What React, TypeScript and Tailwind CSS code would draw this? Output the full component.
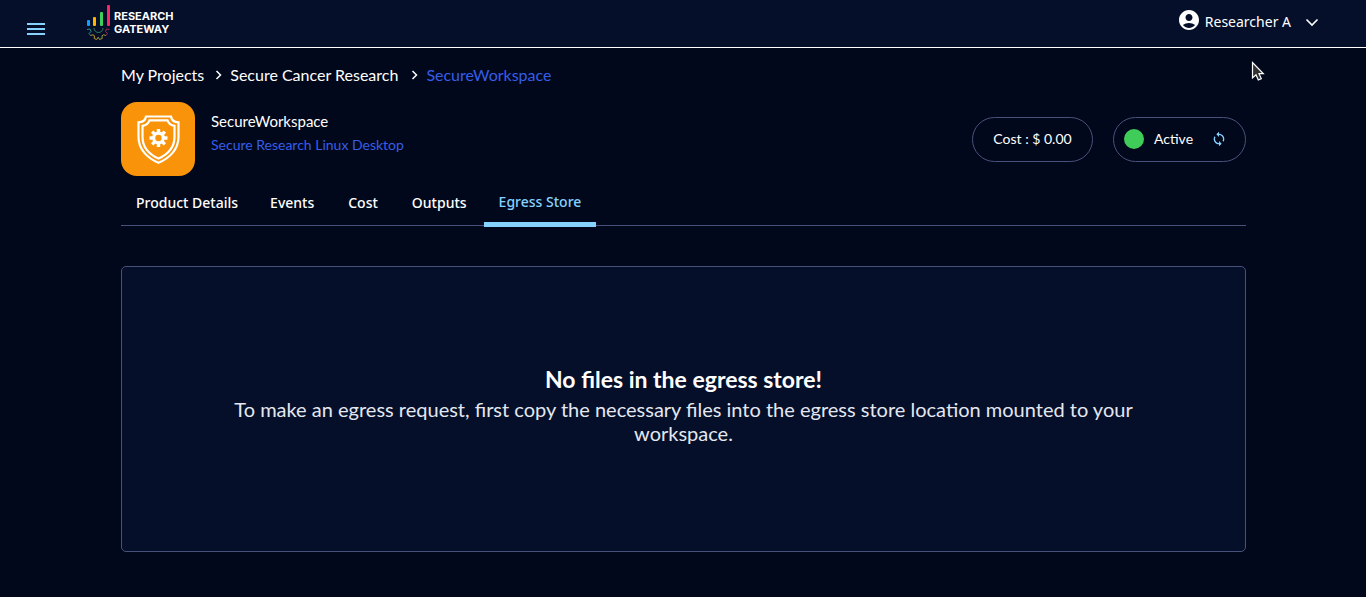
import React from "react";
import { MdAccountCircle, MdSync } from "react-icons/md";

const body = "font-['Lato','Noto_Sans',sans-serif]";

function MenuIcon() {
  return (
    <svg width="20" height="12" viewBox="0 0 20 12" fill="#86d2ff" aria-hidden="true">
      <rect x="1" width="18" height="2" />
      <rect x="1" y="5" width="18" height="2" />
      <rect x="1" y="10" width="18" height="2" />
    </svg>
  );
}

function LogoMark() {
  return (
    <svg width="26" height="36" viewBox="0 0 26 36" fill="none" aria-hidden="true">
      <rect x="1" y="15" width="3" height="6" rx="1" fill="#0da2ff" />
      <rect x="7" y="12" width="3" height="9" rx="1" fill="#ffb400" />
      <rect x="14" y="7" width="3" height="14" rx="1" fill="#3fcf5c" />
      <rect x="21" y="0" width="3" height="21" rx="1" fill="#fb2663" />
      <path d="M1 24.500 l3 -.5 l1 2.500 l-2 2 l1.500 2" stroke="#2f8f8a" />
      <path d="M4.500 30.500 l2.500 -.7 l1.500 1 l-.3 2.700 l2.500 1 l1.500 -2.300" stroke="#b9982c" />
      <path d="M12.200 32.200 l1.300 2.300 l2.700 -1 l-.2 -2.700 l1.500 -1 l2.500 .7" stroke="#9c9a36" />
      <path d="M20 30.500 l1.500 -2 l-2 -2 l1 -2.500 l3 .5" stroke="#a32a55" />
      <path d="M8 23 a4.500 4.500 0 0 0 9 0" stroke="#347f55" />
    </svg>
  );
}

function ShieldIcon() {
  const teeth = [0, 45, 90, 135, 180, 225, 270, 315];
  return (
    <svg width="74" height="74" viewBox="0 0 74 74" fill="none" stroke="#fff" aria-hidden="true">
      <path
        strokeWidth="2.200"
        d="M25 14.500H50C50.500 18 53 20 57.500 20.300V35C57.500 47 49 56 37.500 60.700C26 56 17.500 47 17.500 35V20.300C22 20 24.500 18 25 14.500Z"
      />
      <path
        strokeWidth="2.200"
        d="M28.500 18.300H46.500C47.500 21 50 23.200 53.500 23.800V35C53.500 45 46.500 52.500 37.500 56.600C28.500 52.500 21.500 45 21.500 35V23.800C25 23.200 27.500 21 28.500 18.300Z"
      />
      <circle cx="37.500" cy="36" r="4.800" strokeWidth="3.200" />
      {teeth.map((a) => (
        <path key={a} d="M37.500 27V31" strokeWidth="3.400" transform={`rotate(${a} 37.500 36)`} />
      ))}
    </svg>
  );
}

function Chevron({ className }: { className: string }) {
  return (
    <svg className={className} viewBox="0 0 12 12" fill="none" stroke="#fff" strokeWidth="1.500" aria-hidden="true">
      <path d="M4.500 2L8.500 6L4.500 10" />
    </svg>
  );
}

function Pointer() {
  return (
    <svg className="pointer-events-none absolute top-[61px] right-[100px]" width="16" height="21" viewBox="0 0 16 21" aria-hidden="true">
      <path
        d="M2.500 1.500V17L6 13.800L8.300 19L11.300 17.600L9 12.700H13.300Z"
        fill="#333"
        stroke="#fff"
        strokeWidth="1.200"
      />
    </svg>
  );
}

const tabs = ["Product Details", "Events", "Cost", "Outputs"];

export default function App() {
  return (
    <div className={`relative min-h-screen bg-[#02081b] text-white ${body}`}>
      <header className="flex h-12 items-center border-b border-white bg-[#050f2a] pr-[47px] pb-[2px] pl-[26px]">
        <button type="button" aria-label="Open menu" className="mt-3">
          <MenuIcon />
        </button>
        <a href="#home" className="ml-10 flex items-center gap-[2px]">
          <LogoMark />
          <span className="font-['Inter',sans-serif] text-[11px] leading-[13px] font-bold">
            RESEARCH
            <br />
            GATEWAY
          </span>
        </a>
        <button type="button" className="mb-[2px] ml-auto flex items-center font-['Noto_Sans',sans-serif] text-sm">
          <MdAccountCircle size={24} className="mr-1 mb-1" />
          Researcher A
          <svg className="ml-[14px]" width="14" height="14" viewBox="0 0 14 14" fill="none" stroke="#fff" strokeWidth="1.600" aria-hidden="true">
            <path d="M1.500 4.500L7 10L12.500 4.500" />
          </svg>
        </button>
      </header>
      <Pointer />

      <main className="pt-4 pr-[120px] pb-11 pl-[121px]">
        <nav aria-label="Breadcrumb" className="flex items-center text-base leading-[22px]">
          <a href="#projects">My Projects</a>
          <Chevron className="mr-[6px] ml-2 size-3" />
          <a href="#cancer">Secure Cancer Research</a>
          <Chevron className="mr-[6px] ml-[10px] size-3" />
          <span className="text-[#355dea]" aria-current="page">SecureWorkspace</span>
        </nav>

        <section className="mt-4 flex items-center">
          <div className="rounded-2xl bg-[#f8930a]">
            <ShieldIcon />
          </div>
          <div className="mb-3 ml-4">
            <h1 className="text-[15px] leading-6">SecureWorkspace</h1>
            <a href="#product" className="block text-sm leading-6 text-[#355dea]">
              Secure Research Linux Desktop
            </a>
          </div>
          <div className="ml-auto flex gap-5 text-sm">
            <div className="flex h-[45px] w-[121px] items-center justify-center rounded-full border border-[#46527a]">
              Cost : $ 0.00
            </div>
            <div className="flex h-[45px] w-[133px] items-center rounded-full border border-[#46527a] px-[10px]">
              <span className="mr-[10px] size-5 rounded-full bg-[#40cc58]" />
              Active
              <button type="button" aria-label="Refresh status" className="mr-2 ml-auto text-[#86d2ff]">
                <MdSync size={16} />
              </button>
            </div>
          </div>
        </section>

        <div role="tablist" className="mt-2 flex h-[42px] border-b border-[#46527a] font-['Noto_Sans',sans-serif] text-sm font-medium">
          {tabs.map((tab) => (
            <button key={tab} type="button" role="tab" aria-selected="false" className="px-[17px] pb-1 first:px-[15px]">
              {tab}
            </button>
          ))}
          <button
            type="button"
            role="tab"
            aria-selected="true"
            className="-mb-[2px] h-[43px] border-b-[5px] border-[#86d2ff] px-[15px] pb-[2px] text-[#86d2ff]"
          >
            Egress Store
          </button>
        </div>

        <section className="mt-10 flex h-[286px] flex-col items-center justify-center rounded-[5px] border border-[#46527a] bg-[#050f2a] px-[100px] pb-3 text-center">
          <h2 className="text-[23px] leading-9 font-bold">No files in the egress store!</h2>
          <p className="text-xl leading-6 text-[#e4e7f0]">
            To make an egress request, first copy the necessary files into the egress store location mounted to your
            workspace.
          </p>
        </section>
      </main>
    </div>
  );
}
